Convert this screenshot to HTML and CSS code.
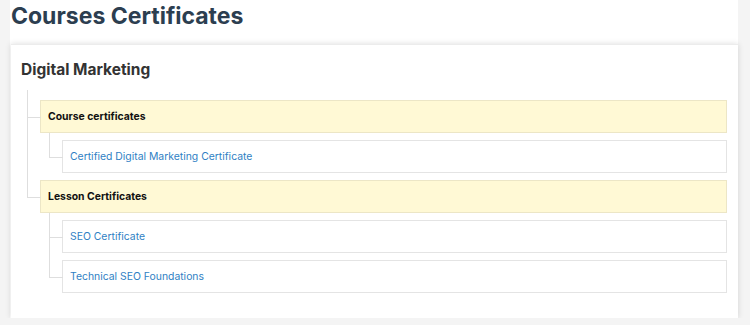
FILE: index.html
```html
<!DOCTYPE html>
<html>
<head>
<meta charset="utf-8">
<link rel="stylesheet" href="styles.css">
</head>
<body>
<div class="page">
  <h1 class="title">Courses Certificates</h1>
  <section class="card">
    <h2 class="course">Digital Marketing</h2>
    <ul class="tree">
      <li class="group">
        <div class="group-head">Course certificates</div>
        <ul class="items">
          <li class="item"><a href="#">Certified Digital Marketing Certificate</a></li>
        </ul>
      </li>
      <li class="group">
        <div class="group-head">Lesson Certificates</div>
        <ul class="items">
          <li class="item"><a href="#">SEO Certificate</a></li>
          <li class="item"><a href="#">Technical SEO Foundations</a></li>
        </ul>
      </li>
    </ul>
  </section>
</div>
</body>
</html>
```

FILE: styles.css
```css
* { box-sizing: border-box; }
html, body { margin: 0; padding: 0; }
body {
  background: #f4f4f4;
  font-family: Inter, "Noto Sans", sans-serif;
  color: #222;
}
.page {
  margin: 0 12px 0 10px;
  background: #fff;
}
.title {
  margin: 0;
  padding: 1px 0 0 1px;
  height: 44px;
  font-size: 23px;
  line-height: 30px;
  font-weight: 700;
  color: #2c3e50;
}
.card {
  background: #fff;
  margin-left: 1px;
  box-shadow: 0 0 6px rgba(0, 0, 0, 0.14);
  border-top: 1px solid #ececec;
  padding: 13px 11px 25px 10px;
}
.course {
  margin: 0;
  font-size: 15.5px;
  line-height: 24px;
  font-weight: 700;
  color: #333;
}
ul { list-style: none; margin: 0; }
.tree {
  margin-left: 6px;
  padding: 18px 0 0 13px;
}
.items {
  margin-left: 9px;
  padding: 7px 0 0 13px;
}
.group, .item { position: relative; }
.group + .group, .item + .item { margin-top: 7px; }
.group::before, .item::before {
  content: "";
  position: absolute;
  left: -13px;
  width: 13px;
  top: -7px;
  height: 24px;
  border-left: 1px solid #dedede;
  border-bottom: 1px solid #dedede;
}
.tree > .group:first-child::before { top: -10px; height: 27px; }
.group:not(:last-child)::after, .item:not(:last-child)::after {
  content: "";
  position: absolute;
  left: -13px;
  top: 17px;
  bottom: -7px;
  border-left: 1px solid #dedede;
}
.group-head {
  height: 33px;
  padding: 0 7px;
  display: flex;
  align-items: center;
  background: #fff9d5;
  border: 1px solid #ece6c6;
  font-size: 10.4px;
  font-weight: 700;
  color: #111;
}
.item a {
  height: 33px;
  display: flex;
  align-items: center;
  padding: 0 7px;
  border: 1px solid #e4e4e4;
  background: #fff;
  font-size: 10.4px;
  color: #2f7fc4;
  text-decoration: none;
}
```
